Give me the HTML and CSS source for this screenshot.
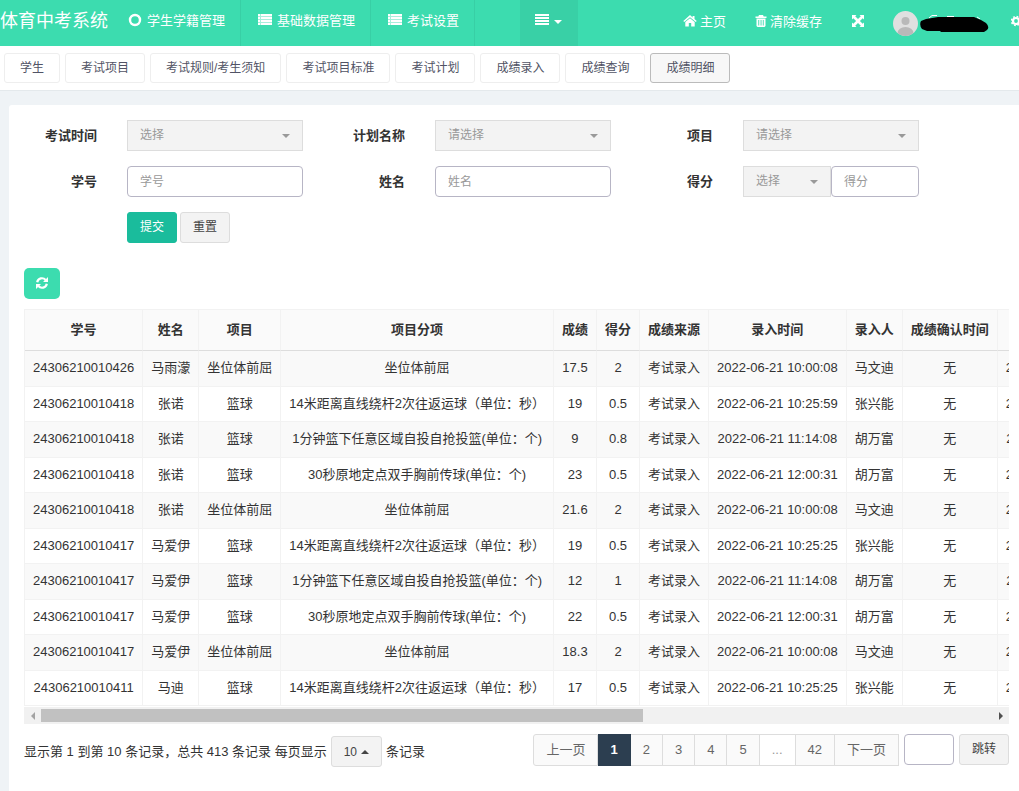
FILE: index.html
```html
<!DOCTYPE html>
<html lang="zh-CN">
<head>
<meta charset="utf-8">
<title>体育中考系统</title>
<link rel="stylesheet" href="styles.css">
</head>
<body>
<header class="navbar">
  <a class="brand" href="#">体育中考系统</a>
  <nav class="menu">
    <a class="menu-item menu-first" href="#"><svg class="icon" viewBox="0 0 14 14"><circle cx="7" cy="7" r="5" fill="none" stroke="currentColor" stroke-width="2.400"/></svg>学生学籍管理</a>
    <a class="menu-item" href="#"><svg class="icon" viewBox="0 0 14 14"><path fill="currentColor" fill-opacity=".55" d="M0 1h14v11H0z"/><path fill="currentColor" d="M0 1h2v2H0zM3 1h11v2H3zM0 4h2v2H0zM3 4h11v2H3zM0 7h2v2H0zM3 7h11v2H3zM0 10h2v2H0zM3 10h11v2H3z"/></svg>基础数据管理</a>
    <a class="menu-item" href="#"><svg class="icon" viewBox="0 0 14 14"><path fill="currentColor" fill-opacity=".55" d="M0 1h14v11H0z"/><path fill="currentColor" d="M0 1h2v2H0zM3 1h11v2H3zM0 4h2v2H0zM3 4h11v2H3zM0 7h2v2H0zM3 7h11v2H3zM0 10h2v2H0zM3 10h11v2H3z"/></svg>考试设置</a>
  </nav>
  <button class="menu-toggle" type="button" aria-label="更多菜单"><svg class="icon" viewBox="0 0 14 14"><path fill="currentColor" d="M0 1h14v2H0zM0 4h14v2H0zM0 7h14v2H0zM0 10h14v2H0z"/></svg><span class="caret"></span></button>
  <div class="tools">
    <a class="tool" href="#"><svg class="icon" viewBox="0 0 14 14"><path fill="currentColor" d="M7 1L0.300 7l.9 1L7 3.200 12.800 8l.9-1-2.200-2V1.900H9.600v1.500zM7 4.200L2.300 8v4.500h3.500V9h2.400v3.500h3.500V8z"/></svg>主页</a>
    <a class="tool tool-clear" href="#"><svg class="icon" viewBox="0 0 14 14"><path fill="currentColor" fill-rule="evenodd" d="M5 1h4l.7 1.500H12.500V4h-11V2.500h2.800zM2.500 4.500h9V12l-1 1h-7l-1-1zM4.300 6v5.500h.9V6zM6.600 6v5.500h.9V6zM8.800 6v5.500h.9V6z"/></svg>清除缓存</a>
    <button class="tool tool-full" type="button" aria-label="全屏"><svg class="icon" viewBox="0 0 14 14"><path fill="currentColor" d="M1 1h4.500L4.200 2.300 7 5.100l2.800-2.800L8.500 1H13v4.500l-1.300-1.300L8.900 7l2.800 2.800L13 8.500V13H8.500l1.300-1.300L7 8.900l-2.800 2.800L5.500 13H1V8.500l1.300 1.300L5.100 7 2.300 4.200 1 5.500z"/></svg></button>
    <a class="user" href="#" aria-label="用户">
      <svg class="avatar" viewBox="0 0 25 25"><defs><clipPath id="face"><circle cx="12.500" cy="12.500" r="12.500"/></clipPath></defs><g clip-path="url(#face)"><path fill="#e0e0e0" d="M0 0h25v25H0z"/><circle cx="12.500" cy="10" r="4" fill="#b9b9b9"/><ellipse cx="12.500" cy="22" rx="8" ry="6" fill="#b9b9b9"/></g></svg>
      <svg class="user-mask" viewBox="0 0 69 20"><path d="M9 4l3-2.500h5M27 2.500h7M57 3l3 2" fill="none" stroke="#fff"/><path d="M6 5L12 4 18 3H54L61 6 66 9Q70 13 67 16L64 18H21L20 17H7L2 15Q-1 11 1 7Z"/></svg>
    </a>
    <button class="gear" type="button" aria-label="设置"><svg class="icon" viewBox="0 0 14 14"><g fill="none" stroke="currentColor"><circle cx="5" cy="7" r="3" stroke-width="2.200"/><circle cx="5" cy="7" r="4.500" stroke-width="1.600" stroke-dasharray="1.767"/></g></svg></button>
  </div>
</header>

<nav class="tabs">
  <a class="tab" href="#">学生</a>
  <a class="tab" href="#">考试项目</a>
  <a class="tab" href="#">考试规则/考生须知</a>
  <a class="tab" href="#">考试项目标准</a>
  <a class="tab" href="#">考试计划</a>
  <a class="tab" href="#">成绩录入</a>
  <a class="tab" href="#">成绩查询</a>
  <a class="tab active" href="#" aria-current="page">成绩明细</a>
</nav>

<main class="card">
  <form class="filters">
    <div class="field"><label for="exam-time">考试时间</label><div class="select"><select id="exam-time"><option>选择</option></select></div></div>
    <div class="field"><label for="plan">计划名称</label><div class="select"><select id="plan"><option>请选择</option></select></div></div>
    <div class="field"><label for="item">项目</label><div class="select"><select id="item"><option>请选择</option></select></div></div>
    <div class="field"><label for="sid">学号</label><input class="text" id="sid" type="text" placeholder="学号"></div>
    <div class="field"><label for="name">姓名</label><input class="text" id="name" type="text" placeholder="姓名"></div>
    <div class="field"><label for="score">得分</label><div class="pair"><div class="select"><select aria-label="得分条件"><option>选择</option></select></div><input class="text" id="score" type="text" placeholder="得分"></div></div>
    <div class="actions"><button class="btn primary" type="submit">提交</button><button class="btn" type="reset">重置</button></div>
  </form>

  <button class="refresh" type="button" aria-label="刷新"><svg viewBox="0 0 14 14"><g fill="none" stroke="currentColor" stroke-width="2.200"><path d="M2.200 6.200A4.800 4.800 0 0 1 10.600 4"/><path d="M11.800 7.800A4.800 4.800 0 0 1 3.400 10"/></g><path fill="currentColor" d="M13 1v5H8zM1 13V8h5z"/></svg></button>

  <div class="table-wrap">
    <table class="grid">
      <thead><tr><th>学号</th><th>姓名</th><th>项目</th><th>项目分项</th><th>成绩</th><th>得分</th><th>成绩来源</th><th>录入时间</th><th>录入人</th><th>成绩确认时间</th><th>更新时间</th></tr></thead>
      <tbody>
        <tr><td>24306210010426</td><td>马雨濛</td><td>坐位体前屈</td><td>坐位体前屈</td><td>17.5</td><td>2</td><td>考试录入</td><td>2022-06-21 10:00:08</td><td>马文迪</td><td>无</td><td>2022-06-21 10:00:08</td></tr>
        <tr><td>24306210010418</td><td>张诺</td><td>篮球</td><td>14米距离直线绕杆2次往返运球（单位：秒）</td><td>19</td><td>0.5</td><td>考试录入</td><td>2022-06-21 10:25:59</td><td>张兴能</td><td>无</td><td>2022-06-21 10:25:59</td></tr>
        <tr><td>24306210010418</td><td>张诺</td><td>篮球</td><td>1分钟篮下任意区域自投自抢投篮(单位：个)</td><td>9</td><td>0.8</td><td>考试录入</td><td>2022-06-21 11:14:08</td><td>胡万富</td><td>无</td><td>2022-06-21 11:14:08</td></tr>
        <tr><td>24306210010418</td><td>张诺</td><td>篮球</td><td>30秒原地定点双手胸前传球(单位：个)</td><td>23</td><td>0.5</td><td>考试录入</td><td>2022-06-21 12:00:31</td><td>胡万富</td><td>无</td><td>2022-06-21 12:00:31</td></tr>
        <tr><td>24306210010418</td><td>张诺</td><td>坐位体前屈</td><td>坐位体前屈</td><td>21.6</td><td>2</td><td>考试录入</td><td>2022-06-21 10:00:08</td><td>马文迪</td><td>无</td><td>2022-06-21 10:00:08</td></tr>
        <tr><td>24306210010417</td><td>马爱伊</td><td>篮球</td><td>14米距离直线绕杆2次往返运球（单位：秒）</td><td>19</td><td>0.5</td><td>考试录入</td><td>2022-06-21 10:25:25</td><td>张兴能</td><td>无</td><td>2022-06-21 10:25:25</td></tr>
        <tr><td>24306210010417</td><td>马爱伊</td><td>篮球</td><td>1分钟篮下任意区域自投自抢投篮(单位：个)</td><td>12</td><td>1</td><td>考试录入</td><td>2022-06-21 11:14:08</td><td>胡万富</td><td>无</td><td>2022-06-21 11:14:08</td></tr>
        <tr><td>24306210010417</td><td>马爱伊</td><td>篮球</td><td>30秒原地定点双手胸前传球(单位：个)</td><td>22</td><td>0.5</td><td>考试录入</td><td>2022-06-21 12:00:31</td><td>胡万富</td><td>无</td><td>2022-06-21 12:00:31</td></tr>
        <tr><td>24306210010417</td><td>马爱伊</td><td>坐位体前屈</td><td>坐位体前屈</td><td>18.3</td><td>2</td><td>考试录入</td><td>2022-06-21 10:00:08</td><td>马文迪</td><td>无</td><td>2022-06-21 10:00:08</td></tr>
        <tr><td>24306210010411</td><td>马迪</td><td>篮球</td><td>14米距离直线绕杆2次往返运球（单位：秒）</td><td>17</td><td>0.5</td><td>考试录入</td><td>2022-06-21 10:25:25</td><td>张兴能</td><td>无</td><td>2022-06-21 10:25:25</td></tr>
      </tbody>
    </table>
  </div>
  <div class="scrollbar" aria-hidden="true"><span class="arrow left"></span><div class="track"><div class="thumb"></div></div><span class="arrow right"></span></div>

  <footer class="footer">
    <div class="info"><span>显示第 1 到第 10 条记录，总共 413 条记录 每页显示</span><button class="btn size" type="button" aria-haspopup="true">10<span class="caret up"></span></button><span>条记录</span></div>
    <div class="pager">
      <ul class="pages">
        <li><a href="#">上一页</a></li><li><a class="current" href="#" aria-current="page">1</a></li><li><a href="#">2</a></li><li><a href="#">3</a></li><li><a href="#">4</a></li><li><a href="#">5</a></li><li><span class="dots">...</span></li><li><a href="#">42</a></li><li><a href="#">下一页</a></li>
      </ul>
      <input class="text jump" type="text" aria-label="页码"><button class="btn" type="button">跳转</button>
    </div>
  </footer>
</main>
</body>
</html>
```
FILE: styles.css
```css
* { box-sizing: border-box; }
body {
  margin: 0;
  min-height: 100vh;
  display: flex;
  flex-direction: column;
  background: #eff3f6;
  color: #333;
  font: 13px/18px "Liberation Sans", "Noto Sans CJK SC", sans-serif;
  overflow-x: hidden;
}
a { color: inherit; text-decoration: none; }
button, input, select { font: inherit; color: inherit; margin: 0; }
button { cursor: pointer; }

.navbar {
  display: flex;
  height: 46px;
  background: #3cdcaf;
  color: #fff;
  white-space: nowrap;
  overflow: hidden;
}
.brand { font-size: 18px; line-height: 42px; }
.menu { display: flex; }
.menu-item {
  display: flex;
  gap: 5px;
  padding: 0 15px 0 17px;
  border-right: 1px solid #38cfa5;
  line-height: 42px;
}
.icon { width: 14px; height: 14px; flex: none; }
.menu-item .icon, .menu-toggle .icon { margin-top: 13px; }
.menu-first { padding-left: 20px; }
.menu-toggle {
  display: flex;
  gap: 5px;
  margin-left: 45px;
  padding: 0 16px 0 15px;
  border: 0;
  background: #39d0a6;
  color: #fff;
}
.caret {
  border: 4px solid transparent;
  border-top-color: currentColor;
  border-bottom: 0;
}
.menu-toggle .caret { margin: 20px 0 0; }
.tools { display: flex; margin-left: auto; margin-right: -6px; }
.tool, .gear {
  display: flex;
  gap: 3px;
  padding: 0;
  border: 0;
  background: none;
  color: #fff;
  line-height: 44px;
}
.tools .icon { margin-top: 14px; }
.tool-clear { margin-left: 28px; gap: 2px; }
.tool-full { margin-left: 29px; }
.user { display: flex; gap: 2px; margin-left: 28px; padding-top: 11px; }
.avatar { width: 25px; height: 25px; }
.user-mask { width: 69px; height: 20px; margin-top: 3px; }
.gear { margin-left: 22px; }

.tabs {
  display: flex;
  gap: 5px;
  padding: 7px 4px;
  background: #fff;
  border-bottom: 1px solid #e4e9ec;
  white-space: nowrap;
}
.tab {
  padding: 5px 15px;
  border: 1px solid #eee;
  border-radius: 3px;
  color: #515365;
  font-size: 12px;
  line-height: 18px;
}
.tab.active { background: #f7f7f7; border-color: #bbb; }

.card {
  flex: 1;
  margin: 14px 0 0 9px;
  padding: 15px 10px 15px 15px;
  background: #fff;
  border-top-left-radius: 3px;
  min-width: 0;
}
.filters {
  display: grid;
  grid-template-columns: repeat(3, 1fr);
  gap: 15px 29px;
  padding-right: 90px;
}
.field {
  display: grid;
  grid-template-columns: 73px 1fr;
  column-gap: 30px;
  align-items: center;
}
.field label { text-align: right; font-weight: bold; }
.pair { display: grid; grid-template-columns: 1fr 1fr; }
.select { position: relative; }
.select::after {
  content: "";
  position: absolute;
  right: 13px;
  top: 14px;
  border: 4px solid transparent;
  border-top-color: #999;
  border-bottom: 0;
  pointer-events: none;
}
.select select, .text {
  display: block;
  width: 100%;
  height: 31px;
  padding: 0 12px;
  font-size: 12px;
  min-width: 0;
}
.select select {
  appearance: none;
  padding-bottom: 2px;
  border: 1px solid #ddd;
  border-radius: 0;
  background: #f3f3f3;
  color: #999;
}
.text { border: 1px solid #b7b5c5; border-radius: 4px; background: #fff; }
.text::placeholder { color: #999; }
.actions { display: flex; gap: 3px; padding-left: 103px; }
.btn {
  height: 31px;
  padding: 0 12px 2px;
  border: 1px solid #ddd;
  border-radius: 3px;
  background: #f3f3f3;
  color: #444;
  font-size: 12px;
  line-height: 18px;
  white-space: nowrap;
}
.btn.primary { background: #1abc9c; border-color: #1abc9c; color: #fff; }

.refresh {
  display: flex;
  align-items: center;
  justify-content: center;
  width: 36px;
  height: 31px;
  margin: 25px 0 10px;
  padding: 0 0 2px;
  border: 0;
  border-radius: 5px;
  background: #3cdcaf;
  color: #fff;
}
.refresh svg { width: 14px; height: 14px; }

.table-wrap { overflow: hidden; padding-bottom: 1px; }
.grid { border-collapse: separate; border-spacing: 0; border-left: 1px solid #f2f2f2; white-space: nowrap; }
.grid th, .grid td {
  padding: 8px;
  border-right: 1px solid #f2f2f2;
  border-bottom: 1px solid #f2f2f2;
  text-align: center;
}
.grid th {
  padding: 11px 8px;
  border-top: 1px solid #f2f2f2;
  border-bottom-color: #ddd;
  background: #fafafa;
}
.grid tr:nth-child(odd) td { padding-bottom: 9px; background: #f9f9f9; }

.scrollbar { display: flex; align-items: center; height: 17px; background: #f1f1f1; }
.arrow { flex: 0 0 17px; display: flex; justify-content: center; }
.arrow::before { content: ""; border: 4px solid transparent; }
.arrow.left::before { border-right-color: #a3a3a3; border-left: 0; }
.arrow.right::before { border-left-color: #505050; border-right: 0; }
.track { flex: 1; }
.thumb { width: 63.3%; height: 13px; background: #c1c1c1; }

.footer {
  display: flex;
  flex-wrap: wrap;
  justify-content: space-between;
  padding-top: 10px;
}
.info { display: flex; align-items: center; gap: 4px; padding-top: 2px; }
.size { display: flex; align-items: center; gap: 4px; padding-bottom: 0; }
.caret.up { border: 4px solid transparent; border-bottom-color: currentColor; border-top: 0; }
.pager { display: flex; gap: 5px; }
.pages { display: flex; margin: 0; padding: 0; list-style: none; }
.pages a, .dots {
  display: block;
  padding: 6px 12px;
  border: 1px solid #ddd;
  border-left: 0;
  background: #fafafa;
  color: #666;
}
.pages li:first-child a { border-left: 1px solid #ddd; border-radius: 3px 0 0 3px; }
.pages .dots { background: #fff; color: #999; }
.pages .current { background: #2c3e50; border-color: #2c3e50; color: #fff; font-weight: bold; }
.jump { width: 50px; }
```
